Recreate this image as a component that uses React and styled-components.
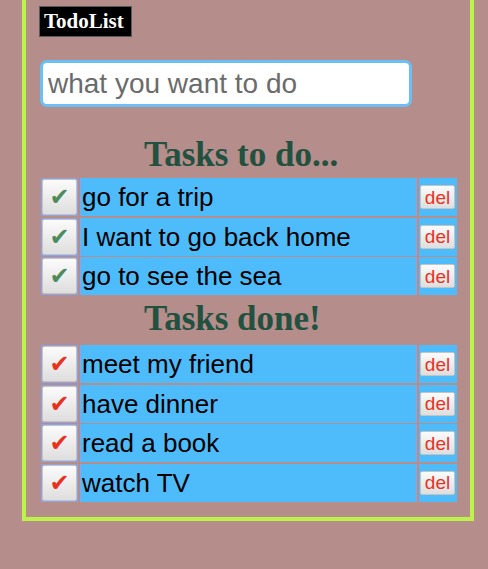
import React from 'react';
import styled, { createGlobalStyle } from 'styled-components';

const GlobalStyle = createGlobalStyle`
  html, body {
    margin: 0;
    padding: 0;
    background: #b58d8b;
  }
`;

const todo = ['go for a trip', 'I want to go back home', 'go to see the sea'];
const done = ['meet my friend', 'have dinner', 'read a book', 'watch TV'];

class App extends React.Component {
  render() {
    return (
      <>
        <GlobalStyle />
        <Wrapper>
          <Title>TodoList</Title>
          <TaskInput placeholder="what you want to do" />
          <Heading top={28} bottom={3}>Tasks to do...</Heading>
          <TaskList>
            {todo.map(t => (
              <Row key={t}>
                <CheckCell>
                  <CheckButton isDone={false}>✔</CheckButton>
                </CheckCell>
                <TextCell>{t}</TextCell>
                <DelCell>
                  <DelButton>del</DelButton>
                </DelCell>
              </Row>
            ))}
          </TaskList>
          <Heading top={4} bottom={6}>Tasks done!</Heading>
          <TaskList>
            {done.map(t => (
              <Row key={t}>
                <CheckCell>
                  <CheckButton isDone={true}>✔</CheckButton>
                </CheckCell>
                <TextCell>{t}</TextCell>
                <DelCell>
                  <DelButton>del</DelButton>
                </DelCell>
              </Row>
            ))}
          </TaskList>
        </Wrapper>
      </>
    );
  }
}

export default App;

const Wrapper = styled.div`
  width: 444px;
  margin-left: 22px;
  border: 4px solid #bdf24b;
  border-top: none;
  padding: 6px 0 15px 0;
  display: flex;
  flex-direction: column;
  align-items: flex-start;
`;

const Title = styled.div`
  margin-left: 13px;
  background: #000;
  color: #fff;
  border: 1px solid #5a5a5a;
  padding: 3px 7px 3px 4px;
  font-family: "Liberation Serif", serif;
  font-weight: bold;
  font-size: 21px;
  line-height: 23px;
`;

const TaskInput = styled.input`
  box-sizing: border-box;
  margin: 23px 0 0 14px;
  width: 372px;
  height: 47px;
  border: 3px solid #6cbff2;
  border-radius: 7px;
  padding: 0 0 0 5px;
  font-family: "Liberation Sans", Arial, sans-serif;
  font-size: 28px;
  color: #000;
  background: #fff;
  outline: none;
  &::placeholder {
    color: #6b6b6b;
  }
`;

const Heading = styled.h2`
  margin: ${props => props.top}px 0 ${props => props.bottom}px 118px;
  font-family: "Liberation Serif", serif;
  font-weight: bold;
  font-size: 35px;
  line-height: 40px;
  color: #23513f;
`;

const TaskList = styled.div`
  margin-left: 15px;
  display: flex;
  flex-direction: column;
  gap: 1.6px;
`;

const Row = styled.div`
  display: flex;
  gap: 2px;
  height: 38px;
`;

const CheckCell = styled.div`
  box-sizing: border-box;
  width: 37px;
  border: 1px solid #8ea3e6;
  display: flex;
`;

const CheckButton = styled.button`
  flex: 1;
  margin: 0;
  padding: 0;
  border: 1px solid #c4c4c4;
  border-radius: 2px;
  background: linear-gradient(#fbfbfb, #dedede);
  color: ${props => (props.isDone ? '#e8321e' : '#4c8c5c')};
  font-family: "DejaVu Sans", sans-serif;
  font-size: 24px;
  line-height: 1;
`;

const TextCell = styled.div`
  box-sizing: border-box;
  width: 337px;
  background: #4ebcfa;
  border-left: 1px solid #8ea3e6;
  border-right: 1px solid #8ea3e6;
  padding-left: 1px;
  font-family: "Liberation Sans", Arial, sans-serif;
  font-size: 26px;
  line-height: 38px;
  color: #000;
  white-space: nowrap;
`;

const DelCell = styled.div`
  width: 38px;
  background: #4ebcfa;
  display: flex;
  align-items: center;
  padding-left: 1px;
  box-sizing: border-box;
`;

const DelButton = styled.button`
  width: 35px;
  height: 24px;
  margin: 0;
  padding: 0;
  border: 1px solid #c4c4c4;
  border-radius: 2px;
  background: linear-gradient(#fbfbfb, #dedede);
  color: #e8321e;
  font-family: "Liberation Sans", Arial, sans-serif;
  font-size: 19px;
  line-height: 1;
`;
